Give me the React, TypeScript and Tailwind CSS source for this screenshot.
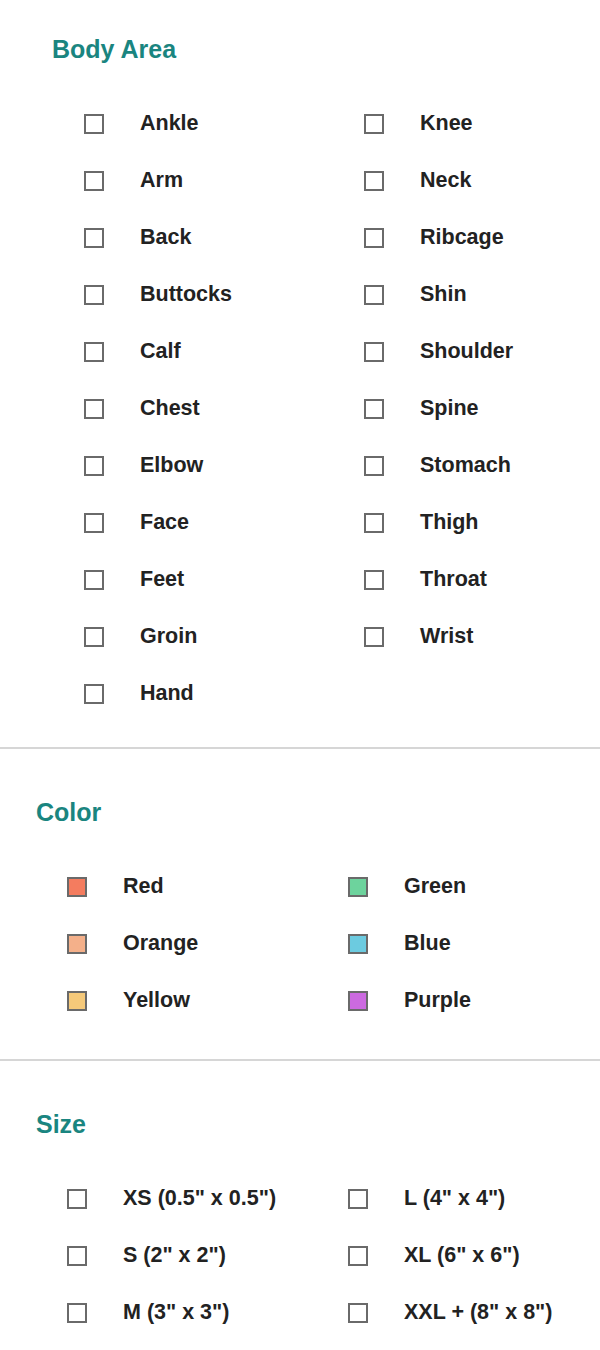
import React from "react";

const bodyAreas = [
  "Ankle", "Knee", "Arm", "Neck", "Back", "Ribcage", "Buttocks", "Shin",
  "Calf", "Shoulder", "Chest", "Spine", "Elbow", "Stomach", "Face", "Thigh",
  "Feet", "Throat", "Groin", "Wrist", "Hand",
];

const colors = [
  { label: "Red", swatch: "bg-[#f47c5f]" },
  { label: "Green", swatch: "bg-[#6dd39d]" },
  { label: "Orange", swatch: "bg-[#f4b08a]" },
  { label: "Blue", swatch: "bg-[#6ccbe0]" },
  { label: "Yellow", swatch: "bg-[#f5c97a]" },
  { label: "Purple", swatch: "bg-[#cc6ae0]" },
];

const sizes = [
  'XS (0.5" x 0.5")', 'L (4" x 4")',
  'S (2" x 2")', 'XL (6" x 6")',
  'M (3" x 3")', 'XXL + (8" x 8")',
];

function Option({ label, swatch }: { label: string; swatch?: string }) {
  return (
    <label className="flex h-[57px] items-center gap-[36px]">
      <span
        className={`block size-[20px] shrink-0 border-2 border-[#6a6a6a] ${swatch ?? "bg-white"}`}
      />
      <span className="text-[21.5px] font-bold whitespace-nowrap text-[#222]">
        {label}
      </span>
    </label>
  );
}

function Heading({ children }: { children: React.ReactNode }) {
  return (
    <h2 className="text-[25px] leading-[32px] font-bold text-[#1a8580]">
      {children}
    </h2>
  );
}

export default function App() {
  return (
    <div
      className="w-[600px] min-h-[1350px] overflow-hidden bg-white"
      style={{ fontFamily: '"Liberation Sans", Arial, sans-serif' }}
    >
      <section className="pl-[52px] pt-[33px] pb-[25px]">
        <Heading>Body Area</Heading>
        <div className="mt-[30px] ml-[32px] grid grid-cols-[280px_1fr]">
          {bodyAreas.map((b) => (
            <Option key={b} label={b} />
          ))}
        </div>
      </section>

      <hr className="h-[2px] border-0 bg-[#d6d6d6]" />

      <section className="pl-[36px] pt-[47px] pb-[30px]">
        <Heading>Color</Heading>
        <div className="mt-[30px] ml-[31px] grid grid-cols-[281px_1fr]">
          {colors.map((c) => (
            <Option key={c.label} label={c.label} swatch={c.swatch} />
          ))}
        </div>
      </section>

      <hr className="h-[2px] border-0 bg-[#d6d6d6]" />

      <section className="pl-[36px] pt-[47px] pb-[20px]">
        <Heading>Size</Heading>
        <div className="mt-[30px] ml-[31px] grid grid-cols-[281px_1fr]">
          {sizes.map((s) => (
            <Option key={s} label={s} />
          ))}
        </div>
      </section>
    </div>
  );
}
